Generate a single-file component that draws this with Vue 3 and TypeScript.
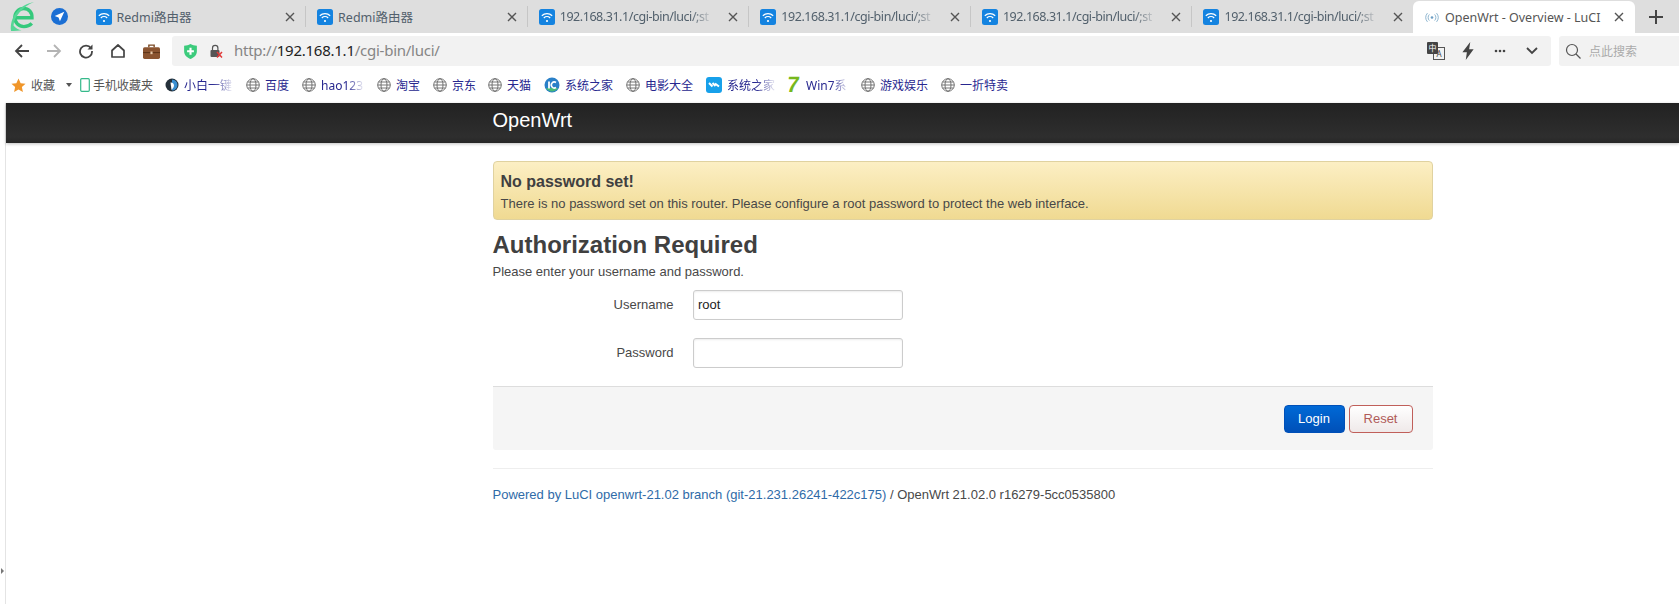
<script setup lang="ts">
interface Tab { title: string; fade: boolean }
const tabs: Tab[] = [
  { title: 'Redmi路由器', fade: false },
  { title: 'Redmi路由器', fade: false },
  { title: '192.168.31.1/cgi-bin/luci/;st', fade: true },
  { title: '192.168.31.1/cgi-bin/luci/;st', fade: true },
  { title: '192.168.31.1/cgi-bin/luci/;st', fade: true },
  { title: '192.168.31.1/cgi-bin/luci/;st', fade: true },
]
interface Mark { icon: string; label: string; width: number; after: number; fade?: boolean; gray?: boolean }
const marks: Mark[] = [
  { icon: 'phone', label: '手机收藏夹', width: 60, after: 12, gray: true },
  { icon: 'xb', label: '小白一键', width: 48, after: 14, fade: true },
  { icon: 'globe', label: '百度', width: 24, after: 13 },
  { icon: 'globe', label: 'hao123', width: 42, after: 14, fade: true },
  { icon: 'globe', label: '淘宝', width: 24, after: 13 },
  { icon: 'globe', label: '京东', width: 24, after: 12 },
  { icon: 'globe', label: '天猫', width: 24, after: 13 },
  { icon: 'it', label: '系统之家', width: 48, after: 13 },
  { icon: 'globe', label: '电影大全', width: 48, after: 13 },
  { icon: 'xt', label: '系统之家', width: 48, after: 10, fade: true },
  { icon: 'seven', label: 'Win7系', width: 42, after: 13, fade: true },
  { icon: 'globe', label: '游戏娱乐', width: 48, after: 13 },
  { icon: 'globe', label: '一折特卖', width: 48, after: 0 },
]
</script>

<template>
  <div class="screen">
    <div class="tabstrip">
      <div class="logos">
        <svg class="elogo" viewBox="0 0 26 32" width="26" height="32">
          <path d="M6 16.800h17c.3-5.800-3.500-9.300-8.200-9.300-5.200 0-9 3.900-9 9.100 0 5.300 3.900 9 9.100 9 3.200 0 5.800-1 7.900-3.200" fill="none" stroke="#35c97c" stroke-width="3.400" />
          <path d="M2 30C.5 16 10 4 25 1 13 6 5 16 4.500 24.500c2 2.800 5 4.300 8 4.800-4 .8-7.500.8-10.500.7z" fill="#56d696" />
        </svg>
        <svg class="send" viewBox="0 0 16 16" width="17" height="17">
          <circle cx="8" cy="8" r="8" fill="#1b6fd4" />
          <path d="M12.500 3.500 3.500 7.600l3.600 1.300 1.300 3.600z" fill="#fff" />
        </svg>
      </div>
      <div v-for="(t, i) in tabs" :key="i" class="tab">
        <svg class="wifi" viewBox="0 0 16 16" width="16" height="16">
          <rect width="16" height="16" rx="2.500" fill="#1483e0" />
          <path d="M2.800 6.800a7.500 7.500 0 0 1 10.400 0M4.800 9a4.600 4.600 0 0 1 6.400 0" fill="none" stroke="#fff" stroke-width="1.200" />
          <circle cx="8" cy="12" r="1.100" fill="#fff" />
        </svg>
        <span class="tab-title" :class="{ fade: t.fade }">{{ t.title }}</span>
        <svg class="close" viewBox="0 0 10 10" width="10" height="10"><path d="M1 1l8 8M9 1l-8 8" stroke="#555" stroke-width="1.400" /></svg>
      </div>
      <div class="tab active">
        <svg class="radio" viewBox="0 0 16 12" width="14" height="11">
          <circle cx="8" cy="6" r="1.500" fill="#6d9ec4" />
          <path d="M5 2.500a5 5 0 0 0 0 7M11 2.500a5 5 0 0 1 0 7M2.800 1a8 8 0 0 0 0 10M13.200 1a8 8 0 0 1 0 10" fill="none" stroke="#7fabc9" stroke-width="1" />
        </svg>
        <span class="tab-title">OpenWrt - Overview - LuCI</span>
        <svg class="close" viewBox="0 0 10 10" width="10" height="10"><path d="M1 1l8 8M9 1l-8 8" stroke="#555" stroke-width="1.400" /></svg>
      </div>
      <svg class="plus" viewBox="0 0 14 14" width="14" height="14"><path d="M7 0v14M0 7h14" stroke="#444" stroke-width="2" /></svg>
    </div>

    <div class="toolbar">
      <div class="nav">
        <svg viewBox="0 0 16 16" width="16" height="16"><path d="M15 8H2M8 2 2 8l6 6" fill="none" stroke="#444" stroke-width="1.800" /></svg>
        <svg viewBox="0 0 16 16" width="16" height="16"><path d="M1 8h13M8 2l6 6-6 6" fill="none" stroke="#b4b4b4" stroke-width="1.800" /></svg>
        <svg viewBox="0 0 16 16" width="16" height="16"><path d="M13 5.200A6 6 0 1 0 14 8" fill="none" stroke="#444" stroke-width="1.800" /><path d="M14.500 1.500v5h-5z" fill="#444" /></svg>
        <svg viewBox="0 0 16 16" width="16" height="16"><path d="M2 7.500 8 2l6 5.500V14H2z" fill="none" stroke="#444" stroke-width="1.700" stroke-linejoin="round" /></svg>
        <svg viewBox="0 0 16 16" width="17" height="17"><path d="M5.500 4V2h5v2" fill="none" stroke="#7a4a24" stroke-width="1.300" /><rect y="4" width="16" height="11" rx="1.500" fill="#8a5430" /><rect y="8.500" width="16" height="1" fill="#5f3619" /><rect x="7" y="8" width="2" height="2.500" fill="#e8c9a8" /></svg>
      </div>
      <div class="address">
        <svg class="shield" viewBox="0 0 14 16" width="15" height="17"><path d="M1 2.500C3.500 2.500 5 2 7 1c2 1 3.500 1.500 6 1.500V8c0 3.500-3 6-6 7-3-1-6-3.500-6-7z" fill="#3ccb7c" /><path d="M7 4.500v6.500M3.800 7.800h6.400" stroke="#fff" stroke-width="2" /></svg>
        <svg class="lock" viewBox="0 0 14 14" width="14" height="14"><path d="M3.500 6V4a2.700 2.700 0 0 1 5.400 0v2" fill="none" stroke="#555" stroke-width="1.200" /><rect x="1.500" y="6" width="9" height="7" rx="1" fill="#555" /><path d="M8 8l5 5.500M13 8l-5 5.500" stroke="#e03a3a" stroke-width="1.500" /></svg>
        <span class="url">http://<b>192.168.1.1</b>/cgi-bin/luci/</span>
        <div class="addr-tools">
          <span class="tool"><span class="translate"><i class="zh">中</i><i class="en">A</i></span></span>
          <span class="tool"><svg viewBox="0 0 12 16" width="14" height="18"><path d="M8 0 1 9h4l-1 7 7-9.500H7z" fill="#444" /></svg></span>
          <span class="tool"><svg viewBox="0 0 12 4" width="12" height="4"><circle cx="2" cy="2" r="1.300" fill="#444" /><circle cx="6" cy="2" r="1.300" fill="#444" /><circle cx="10" cy="2" r="1.300" fill="#444" /></svg></span>
          <span class="tool"><svg viewBox="0 0 12 8" width="12" height="8"><path d="M1 1l5 5 5-5" fill="none" stroke="#444" stroke-width="1.800" /></svg></span>
        </div>
      </div>
      <div class="search">
        <svg viewBox="0 0 16 16" width="16" height="16"><circle cx="7" cy="7" r="5.500" fill="none" stroke="#555" stroke-width="1.200" /><path d="M11 11l4.500 4.500" stroke="#555" stroke-width="1.200" /></svg>
        <span>点此搜索</span>
      </div>
    </div>

    <div class="bookmarks">
      <svg class="star" viewBox="0 0 16 16" width="15" height="15"><path d="M8 .5l2.300 5 5.200.6-3.900 3.600 1.100 5.300L8 12.300 3.300 15l1.100-5.300L.5 6.100l5.200-.6z" fill="#f0962a" /></svg>
      <span class="mark-label gray fav">收藏</span>
      <span class="caret"></span>
      <div v-for="(m, i) in marks" :key="i" class="mark" :style="{ marginRight: m.after + 'px' }">
        <svg v-if="m.icon === 'globe'" viewBox="0 0 14 14" width="14" height="14"><g fill="none" stroke="#666" stroke-width=".9"><circle cx="7" cy="7" r="6.300" /><ellipse cx="7" cy="7" rx="3" ry="6.300" /><path d="M.7 7h12.600M1.500 4h11M1.500 10h11" /></g></svg>
        <svg v-else-if="m.icon === 'phone'" viewBox="0 0 10 14" width="10" height="14"><rect x=".7" y=".7" width="8.600" height="12.600" rx="1" fill="none" stroke="#35b98a" stroke-width="1.200" /></svg>
        <svg v-else-if="m.icon === 'xb'" viewBox="0 0 14 14" width="14" height="14"><circle cx="7" cy="7" r="6.500" fill="#24303a" /><path d="M7 1.500a5.500 5.500 0 0 1 0 11z" fill="#3a8fd0" /><path d="M5.500 4.500a3 3 0 0 1 3.500 2.500c0 2-1 3.500-2.500 5z" fill="#fff" /></svg>
        <svg v-else-if="m.icon === 'it'" viewBox="0 0 16 16" width="16" height="16"><circle cx="8" cy="8" r="7.500" fill="#2a80c8" /><path d="M2 11a7 7 0 0 0 12 0z" fill="#46b878" /><path d="M5 4.500v7" stroke="#fff" stroke-width="1.800" /><path d="M12 5.500a3 3 0 1 0 0 5" fill="none" stroke="#fff" stroke-width="1.600" /></svg>
        <svg v-else-if="m.icon === 'xt'" viewBox="0 0 16 16" width="16" height="16"><rect width="16" height="16" rx="3" fill="#17a0ea" /><path d="M3 6l3.500 3.500M6.500 6l3 3M9 6.500 13 9.500" stroke="#fff" stroke-width="2" /></svg>
        <span v-else-if="m.icon === 'seven'" class="seven">7</span>
        <span class="mark-label" :class="{ gray: m.gray, fade: m.fade }" :style="{ width: m.width + 'px' }">{{ m.label }}</span>
      </div>
    </div>

    <div class="page">
      <div class="topbar"><div class="wrap brand">OpenWrt</div></div>
      <main class="wrap content">
        <div class="alert">
          <h4>No password set!</h4>
          <p>There is no password set on this router. Please configure a root password to protect the web interface.</p>
        </div>
        <h2>Authorization Required</h2>
        <p class="lead">Please enter your username and password.</p>
        <div class="form">
          <label>Username</label>
          <div class="input">root</div>
          <label>Password</label>
          <div class="input"></div>
        </div>
        <div class="actions">
          <button class="btn login" type="button">Login</button>
          <button class="btn reset" type="button">Reset</button>
        </div>
        <footer>
          <a>Powered by LuCI openwrt-21.02 branch (git-21.231.26241-422c175)</a> / OpenWrt 21.02.0 r16279-5cc0535800
        </footer>
      </main>
      <span class="splitter"></span>
    </div>
  </div>
</template>

<style>
html, body { margin: 0; padding: 0; background: #fff; overflow: hidden; }
</style>

<style scoped>
.screen {
  width: 1679px;
  height: 604px;
  overflow: hidden;
  position: relative;
  display: flex;
  flex-direction: column;
  font-family: "Noto Sans", "Noto Sans CJK SC", sans-serif;
  background: #fff;
}
.tabstrip {
  height: 33px;
  flex: none;
  background: #dedede;
  display: flex;
  align-items: stretch;
}
.logos {
  width: 83.500px;
  flex: none;
  display: flex;
  align-items: center;
  padding-left: 9px;
  gap: 17px;
  box-sizing: border-box;
}
.send { margin-left: -1px; }
.tab {
  width: 221.600px;
  flex: none;
  box-sizing: border-box;
  display: flex;
  align-items: center;
  padding: 0 9px 0 12px;
  position: relative;
  font-size: 12.500px;
  color: #52606c;
}
.tab::after {
  content: "";
  position: absolute;
  right: -1px;
  top: 6px;
  bottom: 6px;
  width: 1px;
  background: #c6c6c6;
}
.tab:nth-last-of-type(2)::after, .tab.active::after { display: none; }
.tab.active {
  background: #fff;
  border-radius: 6px 6px 0 0;
  margin-top: 1px;
  padding-right: 10px;
  color: #555;
}
.tab-title {
  flex: 1;
  margin-left: 5px;
  white-space: nowrap;
  min-width: 0;
}
.tab.active .tab-title { margin-left: 6px; }
.tab-title.fade {
  letter-spacing: -.45px;
  -webkit-mask-image: linear-gradient(to right, #000 82%, rgba(0, 0, 0, .2) 93%);
  mask-image: linear-gradient(to right, #000 82%, rgba(0, 0, 0, .2) 93%);
}
.close { flex: none; margin-left: 8px; margin-right: 1px; }
.plus { align-self: center; margin-left: 14px; }
.toolbar {
  height: 38px;
  flex: none;
  display: flex;
  align-items: flex-start;
  padding-top: 3px;
  box-sizing: border-box;
}
.nav {
  width: 172px;
  height: 30px;
  flex: none;
  display: flex;
  align-items: center;
  padding-left: 13.500px;
  gap: 16.300px;
  box-sizing: border-box;
}
.address {
  width: 1379px;
  height: 30px;
  flex: none;
  background: #f2f2f2;
  border-radius: 3px;
  display: flex;
  align-items: center;
  padding-left: 11px;
  box-sizing: border-box;
}
.lock { margin-left: 11px; }
.url {
  font-size: 15px;
  color: #858585;
  margin-left: 11px;
  padding-bottom: 2px;
  letter-spacing: -.25px;
}
.url b { font-weight: 400; color: #222; }
.addr-tools {
  margin-left: auto;
  margin-right: 3px;
  display: flex;
  align-items: center;
}
.tool {
  width: 32px;
  height: 20px;
  display: flex;
  align-items: center;
  justify-content: center;
}
.translate {
  width: 18px;
  height: 18px;
  position: relative;
  display: block;
}
.translate i {
  font-style: normal;
  position: absolute;
  font-size: 8px;
  line-height: 12px;
  text-align: center;
  width: 11px;
  height: 12px;
}
.zh { left: 0; top: 0; background: #444; color: #fff; z-index: 1; border-radius: 1px; }
.en { right: 0; bottom: 0; border: 1px solid #555; color: #444; width: 10px !important; height: 11px !important; line-height: 11px !important; }
.search {
  flex: 1;
  height: 30px;
  margin-left: 8px;
  background: #f2f2f2;
  border-radius: 3px 0 0 3px;
  display: flex;
  align-items: center;
  padding-left: 6px;
  gap: 8px;
  font-size: 12px;
  color: #aaa;
}
.bookmarks {
  height: 32px;
  flex: none;
  display: flex;
  align-items: center;
  padding-left: 11px;
  padding-bottom: 4px;
  box-sizing: border-box;
  font-size: 12px;
  color: #27278f;
  white-space: nowrap;
}
.fav { margin-left: 5px; }
.caret {
  margin: 0 8px 0 11px;
  border-left: 3px solid transparent;
  border-right: 3px solid transparent;
  border-top: 4px solid #555;
}
.mark {
  display: flex;
  align-items: center;
  gap: 5px;
}
.mark-label { display: block; }
.mark-label.gray { color: #555; }
.mark .mark-label.gray { margin-left: -2px; }
.mark-label.fade {
  -webkit-mask-image: linear-gradient(to right, #000 60%, rgba(0, 0, 0, .1) 100%);
  mask-image: linear-gradient(to right, #000 60%, rgba(0, 0, 0, .1) 100%);
}
.seven {
  font: 700 22px/16px "Liberation Sans", sans-serif;
  color: #77b81c;
  width: 16px;
  text-align: center;
  transform: skewX(-8deg);
}
.page {
  flex: 1;
  margin-left: 5px;
  border-left: 1px solid #e4e4e4;
  font-family: "Liberation Sans", Arial, sans-serif;
  font-size: 13px;
  color: #484848;
  min-height: 0;
}
.topbar {
  height: 40px;
  background: linear-gradient(#222, #2e2e2e 85%, #262626);
  box-shadow: 0 1px 3px rgba(0, 0, 0, .25);
  display: flex;
  align-items: center;
}
.wrap {
  width: 940px;
  margin-left: 486.500px;
}
.brand {
  color: #fff;
  font-size: 20px;
  line-height: 34px;
  padding-bottom: 6px;
}
.content { padding-top: 18px; }
.alert {
  box-sizing: border-box;
  height: 59px;
  padding: 9px 7px 0;
  border: 1px solid #e0d2a0;
  border-radius: 4px;
  background: linear-gradient(#fcefc4, #f0da92);
}
.alert h4 { margin: 0; font-size: 16px; line-height: 22px; color: #404040; }
.alert p { margin: 2px 0 0; font-size: 13px; line-height: 18px; }
h2 {
  margin: 9px 0 0;
  font-size: 24px;
  line-height: 32px;
  color: #404040;
}
.lead { margin: 1px 0 0; line-height: 20px; }
.form {
  display: grid;
  grid-template-columns: 181px 210px;
  column-gap: 19.500px;
  row-gap: 18px;
  align-items: center;
  margin-top: 8px;
}
.form label { text-align: right; padding-bottom: 2px; }
.input {
  box-sizing: border-box;
  height: 30px;
  border: 1px solid #ccc;
  border-radius: 3px;
  box-shadow: inset 0 1px 2px rgba(0, 0, 0, .08);
  padding: 0 4px;
  line-height: 27px;
  color: #222;
}
.actions {
  margin-top: 18px;
  height: 64px;
  box-sizing: border-box;
  background: #f5f5f5;
  border-top: 1px solid #ddd;
  border-radius: 0 0 3px 3px;
  display: flex;
  align-items: center;
  justify-content: flex-end;
  padding: 0 20px 0 0;
  gap: 4px;
}
.btn {
  height: 28px;
  border-radius: 4px;
  font: 13px "Liberation Sans", Arial, sans-serif;
  padding: 0;
}
.login {
  width: 61px;
  color: #fff;
  border: 1px solid #0050b8;
  background: linear-gradient(#0069d6, #0050b8);
}
.reset {
  width: 64px;
  color: #b05a58;
  border: 1px solid #c05f5a;
  background: linear-gradient(#fff, #efe9e9);
}
footer {
  margin-top: 18px;
  border-top: 1px solid #eee;
  padding-top: 17px;
  font-size: 13px;
  line-height: 18px;
}
footer a { color: #2f6ba8; }
.splitter {
  position: absolute;
  left: 1px;
  top: 568px;
  border-top: 3px solid transparent;
  border-bottom: 3px solid transparent;
  border-left: 3px solid #777;
}
</style>
